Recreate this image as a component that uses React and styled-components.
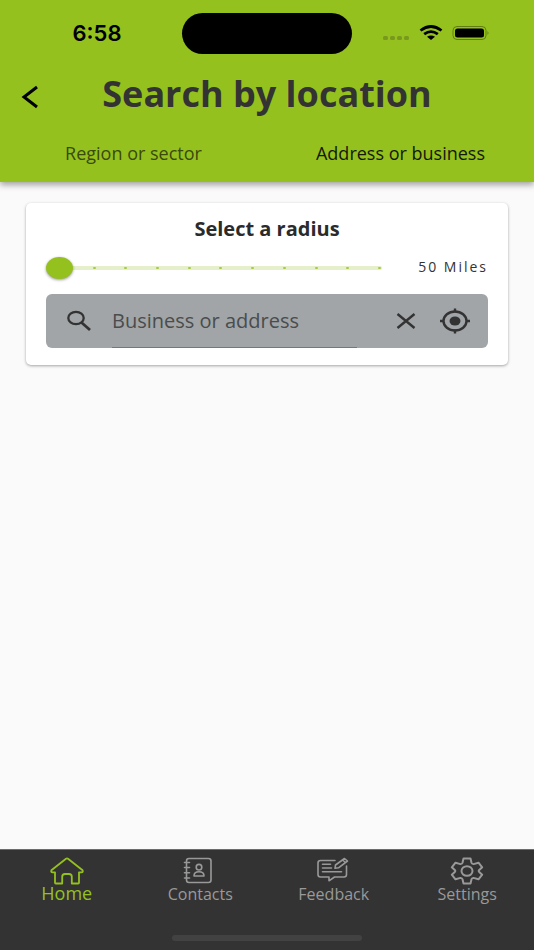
import React, { useState } from "react";
import styled, { createGlobalStyle, css } from "styled-components";

const GREEN = "#95c11f";
const DARK = "#333333";

const GlobalStyle = createGlobalStyle`
  * {
    box-sizing: border-box;
  }
  body {
    margin: 0;
    background: #fafafa;
    color: ${DARK};
    font-family: "Open Sans", sans-serif;
  }
  button,
  input {
    font-family: inherit;
    color: inherit;
  }
`;

const Screen = styled.div`
  display: flex;
  flex-direction: column;
  min-height: 100vh;
`;

const Header = styled.header`
  background: ${GREEN};
  box-shadow: 0 3px 6px rgba(0, 0, 0, 0.35);
`;

const StatusBar = styled.div`
  display: grid;
  grid-template-columns: 1fr 170px 1fr;
  align-items: center;
  padding-top: 13px;
  color: #000;
`;

const Clock = styled.time`
  justify-self: center;
  padding: 0 0 2px 12px;
  font-family: Inter, sans-serif;
  font-size: 22px;
  font-weight: 600;
  line-height: 24px;
`;

const Island = styled.div`
  height: 41px;
  border-radius: 21px;
  background: #000;
`;

const StatusIcons = styled.div`
  display: flex;
  justify-content: flex-end;
  padding: 0 44px 2px 0;
`;

const TitleRow = styled.div`
  display: grid;
  grid-template-columns: 60px 1fr 60px;
  align-items: center;
  height: 80px;
`;

const IconButton = styled.button`
  display: flex;
  align-items: center;
  justify-content: center;
  padding: 0;
  border: none;
  background: none;
  cursor: pointer;
`;

const BackButton = styled(IconButton)`
  padding-top: 6px;
`;

const Title = styled.h1`
  margin: 0;
  font-size: 36px;
  line-height: 40px;
  text-align: center;
`;

const Tabs = styled.nav`
  display: grid;
  grid-template-columns: 1fr 1fr;
  height: 48px;
`;

const Tab = styled.button`
  padding: 0 0 10px;
  border: none;
  background: none;
  font-size: 18px;
  line-height: 24px;
  color: ${props => (props.$active ? "#131904" : "#394a0c")};
  cursor: pointer;
`;

const Main = styled.main`
  flex: 1;
  padding: 21px 26px;
`;

const Card = styled.section`
  padding: 14px 20px 17px;
  border-radius: 5px;
  background: #fff;
  box-shadow: 0 1px 3px rgba(0, 0, 0, 0.35);
`;

const CardTitle = styled.h2`
  margin: 0;
  font-size: 20px;
  line-height: 24px;
  text-align: center;
  color: #2b2b2b;
`;

const RadiusRow = styled.div`
  display: flex;
  align-items: center;
  height: 53px;
`;

const Slider = styled.div`
  position: relative;
  flex: 1;
  height: 22px;
`;

const Ticks = styled.div`
  display: flex;
  align-items: center;
  justify-content: space-between;
  height: 4px;
  margin: 9px 0 9px 14px;
  padding: 0 1px;
  border-radius: 2px;
  background: #e5efc9;
`;

const Tick = styled.span`
  width: 3px;
  height: 2px;
  border-radius: 1px;
  background: #a5cb42;
`;

const thumb = css`
  width: 27px;
  height: 22px;
  border: none;
  border-radius: 50%;
  background: ${GREEN};
  box-shadow: 0 1px 3px rgba(0, 0, 0, 0.4);
`;

const Range = styled.input`
  position: absolute;
  inset: 0;
  width: 100%;
  height: 22px;
  margin: 0;
  appearance: none;
  background: transparent;
  &::-webkit-slider-thumb {
    appearance: none;
    ${thumb}
  }
  &::-moz-range-thumb {
    ${thumb}
  }
`;

const Miles = styled.output`
  width: 106px;
  padding-bottom: 2px;
  font-size: 14px;
  line-height: 20px;
  letter-spacing: 2px;
  text-align: right;
`;

const SearchBox = styled.form`
  display: flex;
  height: 54px;
  border-radius: 6px;
  background: #a1a5a7;
`;

const SearchLabel = styled.label`
  display: flex;
  align-items: center;
  justify-content: center;
  width: 66px;
`;

const SearchInput = styled.input`
  flex: 1;
  min-width: 0;
  padding: 0 0 1px;
  border: none;
  border-bottom: 1px solid #75787a;
  background: none;
  font-size: 20px;
  outline: none;
  &::placeholder {
    color: #4a4c4d;
    opacity: 1;
  }
`;

const SearchActions = styled.div`
  display: grid;
  grid-template-columns: 49px 49px;
  padding: 0 9px 0 24px;
`;

const BottomBar = styled.nav`
  border-top: 1px solid #6c6c6c;
  background: ${DARK};
`;

const NavList = styled.div`
  display: grid;
  grid-template-columns: repeat(4, 1fr);
  height: 84px;
`;

const NavLink = styled.a`
  display: flex;
  flex-direction: column;
  align-items: center;
  padding-top: 6px;
  font-size: ${props => (props.$active ? "18px" : "16px")};
  line-height: ${props => (props.$active ? "14px" : "16px")};
  color: ${props => (props.$active ? GREEN : "#999999")};
  text-decoration: none;
`;

const HomeIndicator = styled.div`
  width: 190px;
  height: 6px;
  margin: 1px auto 9px;
  border-radius: 3px;
  background: #424242;
`;

const NavIcon = styled.svg`
  flex: none;
  width: 34px;
  height: 30px;
  fill: none;
  stroke: currentColor;
  stroke-width: ${props => props.$weight || 1.6};
  stroke-linejoin: round;
  stroke-linecap: round;
`;

const HomeIcon = () => (
  <NavIcon viewBox="0 0 34 30" $weight={1.8}>
    <path d="M16 2.8 1.4 14.2q-.8 2.100 1.200 2.100H5V26.700q0 .8.8.8h6.400v-6.700q0-2.800 2.800-2.800h4q2.800 0 2.800 2.800v6.700h6.400q.8 0 .8-.8V16.300h2.400q2 0 1.200-2.100L18 2.800q-1-.8-2 0Z" />
  </NavIcon>
);

const ContactsIcon = () => (
  <NavIcon viewBox="2.5 0 34 30">
    <rect x="6" y="2.5" width="24.5" height="24" rx="2.5" />
    <path d="M4 6.5h5M4 11.5h5M4 16.8h5M4 22h5" />
    <circle cx="18.5" cy="11.2" r="2.8" />
    <path d="M13.5 20q0-4.2 5-4.2t5 4.2Z" />
  </NavIcon>
);

const FeedbackIcon = () => (
  <NavIcon viewBox="1 0 34 30">
    <path d="M19 4.5H4.5Q2 4.5 2 7v11.5Q2 21 4.5 21H13v3.8L18.5 21H28q2.5 0 2.5-2.5V10" />
    <path d="M6.5 8.3h8M6.5 12h9M6.5 15.800h19" />
    <path d="m19.500 9 9-6.500 3 2.500-9 6.800-3.500.5ZM26.500 4l3 2.500" />
  </NavIcon>
);

const SettingsIcon = () => (
  <NavIcon viewBox="0 0 34 30" $weight={2}>
    <path d="M13.5 2.500h7l1 4.200q.3 1 2 1.400l5-1.400 3.700 4.600-3 2.800q-1 .9 0 1.800l3 2.800-3.700 4.600-5-1.400q-1.700.4-2 1.400l-1 4.200h-7l-1-4.200q-.3-1-2-1.400l-5 1.400-3.700-4.600 3-2.800q1-.9 0-1.800l-3-2.800 3.700-4.600 5 1.400q1.700-.4 2-1.400Z" />
    <ellipse cx="17" cy="15" rx="5.500" ry="4.800" />
  </NavIcon>
);

const NAV_ITEMS = [
  { label: "Home", icon: HomeIcon },
  { label: "Contacts", icon: ContactsIcon },
  { label: "Feedback", icon: FeedbackIcon },
  { label: "Settings", icon: SettingsIcon }
];

const App = () => {
  const [radius, setRadius] = useState(50);
  const [query, setQuery] = useState("");

  return (
    <Screen>
      <GlobalStyle />
      <Header>
        <StatusBar>
          <Clock>6:58</Clock>
          <Island />
          <StatusIcons>
            <svg width="108" height="18" viewBox="0 0 108 18">
              <g fill="#78991e">
                <rect x="1" y="12" width="5" height="4" rx="1.5" />
                <rect x="8" y="12" width="5" height="4" rx="1.5" />
                <rect x="15" y="12" width="5" height="4" rx="1.5" />
                <rect x="22" y="12" width="5" height="4" rx="1.5" />
              </g>
              <g fill="none" stroke="#000" strokeWidth="2.8">
                <path d="M38.5 6.500Q49 -1.500 59.500 6.500" />
                <path d="M42.200 10.200Q49 5 55.800 10.200" />
              </g>
              <path d="M45 12.800q4-2.800 8 0L49 16Z" />
              <rect x="71" y="2.500" width="33" height="13" rx="4" fill="none" stroke="#607d14" />
              <rect x="73" y="4.500" width="29" height="9" rx="2.500" />
              <path d="M105.500 7q2 2 0 4Z" fill="#607d14" />
            </svg>
          </StatusIcons>
        </StatusBar>
        <TitleRow>
          <BackButton type="button" aria-label="Back">
            <svg width="18" height="24" viewBox="0 0 18 24" fill="none" stroke="#000" strokeWidth="3">
              <path d="M16 2 3 12 16 22" />
            </svg>
          </BackButton>
          <Title>Search by location</Title>
        </TitleRow>
        <Tabs>
          <Tab type="button">Region or sector</Tab>
          <Tab type="button" $active>
            Address or business
          </Tab>
        </Tabs>
      </Header>
      <Main>
        <Card>
          <CardTitle id="radius-title">Select a radius</CardTitle>
          <RadiusRow>
            <Slider>
              <Ticks>
                {Array.from({ length: 11 }, (_, i) => (
                  <Tick key={i} />
                ))}
              </Ticks>
              <Range
                type="range"
                id="radius"
                min="50"
                max="550"
                step="50"
                value={radius}
                aria-labelledby="radius-title"
                onChange={e => setRadius(Number(e.target.value))}
              />
            </Slider>
            <Miles htmlFor="radius">{radius} Miles</Miles>
          </RadiusRow>
          <SearchBox onSubmit={e => e.preventDefault()}>
            <SearchLabel htmlFor="search" aria-label="Business or address">
              <svg width="26" height="22" viewBox="0 0 26 22" fill="none" stroke={DARK} strokeWidth="2.300">
                <ellipse cx="10" cy="8" rx="7.700" ry="6.200" />
                <path d="m15.500 12.500 8.500 7.500" strokeWidth="2.800" />
              </svg>
            </SearchLabel>
            <SearchInput
              id="search"
              type="text"
              placeholder="Business or address"
              value={query}
              onChange={e => setQuery(e.target.value)}
            />
            <SearchActions>
              <IconButton type="button" aria-label="Clear" onClick={() => setQuery("")}>
                <svg width="20" height="16" viewBox="0 0 20 16" fill="none" stroke={DARK} strokeWidth="2.400">
                  <path d="m1.500 1 17 14M18.500 1l-17 14" />
                </svg>
              </IconButton>
              <IconButton type="button" aria-label="Use my location">
                <svg width="30" height="26" viewBox="0 0 30 26" fill="none" stroke={DARK} strokeWidth="2.400">
                  <ellipse cx="15" cy="13" rx="11.500" ry="9.500" />
                  <path d="M15 .5v4M15 21.500v4M0 13h4M26 13h4" />
                  <ellipse cx="15" cy="13" rx="5.500" ry="4.500" fill={DARK} stroke="none" />
                </svg>
              </IconButton>
            </SearchActions>
          </SearchBox>
        </Card>
      </Main>
      <BottomBar>
        <NavList>
          {NAV_ITEMS.map(({ label, icon: Icon }) => (
            <NavLink key={label} href="#" $active={label === "Home"}>
              <Icon />
              {label}
            </NavLink>
          ))}
        </NavList>
        <HomeIndicator />
      </BottomBar>
    </Screen>
  );
};

export default App;
